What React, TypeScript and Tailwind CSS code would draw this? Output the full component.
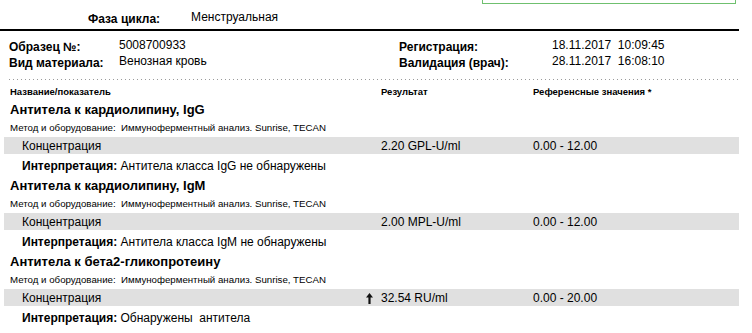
import * as React from "react";

type Test = {
  title: string;
  result: string;
  range: string;
  interp: string;
  high?: boolean;
};

const tests: Test[] = [
  {
    title: "Антитела к кардиолипину, IgG",
    result: "2.20 GPL-U/ml",
    range: "0.00 - 12.00",
    interp: "Антитела класса IgG не обнаружены",
  },
  {
    title: "Антитела к кардиолипину, IgM",
    result: "2.00 MPL-U/ml",
    range: "0.00 - 12.00",
    interp: "Антитела класса IgM не обнаружены",
  },
  {
    title: "Антитела к бета2-гликопротеину",
    result: "32.54 RU/ml",
    range: "0.00 - 20.00",
    interp: "Обнаружены  антитела",
    high: true,
  },
];

function UpArrow() {
  return (
    <svg width="7" height="11" viewBox="0 0 7 11" className="mt-[2px]">
      <path d="M3.5 0 L7 4.5 L4.6 4.5 L4.6 11 L2.4 11 L2.4 4.5 L0 4.5 Z" fill="#111" />
    </svg>
  );
}

function TestBlock({ t }: { t: Test }) {
  return (
    <div className="flex flex-col">
      <div className="flex h-[18px] items-center pl-[10px] text-[13px] font-bold">{t.title}</div>
      <div className="flex h-[18px] items-center pl-[10px] text-[9.7px]">
        Метод и оборудование:&nbsp;&nbsp;Иммуноферментный анализ. Sunrise, TECAN
      </div>
      <div className="ml-[4px] flex h-[17px] w-[735px] items-center bg-[#e0e0e0] text-[12px]">
        <div className="w-[360px] pl-[18px]">Концентрация</div>
        <div className="flex w-[17px] justify-start pl-[2px]">{t.high && <UpArrow />}</div>
        <div className="w-[152px]">{t.result}</div>
        <div>{t.range}</div>
      </div>
      <div className="flex h-[23px] items-center pl-[22px] text-[12px]">
        <span className="font-bold">Интерпретация:</span>
        <span className="whitespace-pre">&nbsp;{t.interp}</span>
      </div>
    </div>
  );
}

export default function App() {
  return (
    <div className="h-[333px] w-[752px] overflow-hidden bg-white text-black [font-family:'Liberation_Sans',Arial,sans-serif]">
      <div className="ml-[482px] h-[4px] w-[254px] border-x border-b border-[#6fc06f]" />

      <div className="flex h-[25px] items-center text-[12px]">
        <span className="ml-[88px] mt-[5px] w-[103px] font-bold">Фаза цикла:</span>
        <span className="mt-[1px]">Менструальная</span>
      </div>
      <div className="h-[2px] w-[739px] bg-black" />

      <div className="mt-[6px] flex text-[12px]">
        <div className="flex w-[399px] flex-col pl-[9px]">
          <div className="flex h-[16px] items-center">
            <span className="mt-[3px] w-[110px] font-bold">Образец №:</span>
            <span>5008700933</span>
          </div>
          <div className="flex h-[16px] items-center">
            <span className="mt-[3px] w-[110px] font-bold">Вид материала:</span>
            <span>Венозная кровь</span>
          </div>
        </div>
        <div className="flex flex-col">
          <div className="flex h-[16px] items-center">
            <span className="mt-[3px] w-[153px] font-bold">Регистрация:</span>
            <span className="whitespace-pre">18.11.2017  10:09:45</span>
          </div>
          <div className="flex h-[16px] items-center">
            <span className="mt-[3px] w-[153px] font-bold">Валидация (врач):</span>
            <span className="whitespace-pre">28.11.2017  16:08:10</span>
          </div>
        </div>
      </div>

      <div className="ml-[9px] mt-[10px] h-px w-[730px] bg-[repeating-linear-gradient(90deg,#9a9a9a_0_1px,transparent_1px_4px)]" />

      <div className="mt-[3px] flex h-[18px] items-center text-[9.5px] font-bold">
        <div className="w-[381px] pl-[10px]">Название/показатель</div>
        <div className="w-[152px]">Результат</div>
        <div>Референсные значения *</div>
      </div>

      {tests.map((t) => (
        <TestBlock key={t.title} t={t} />
      ))}
    </div>
  );
}
